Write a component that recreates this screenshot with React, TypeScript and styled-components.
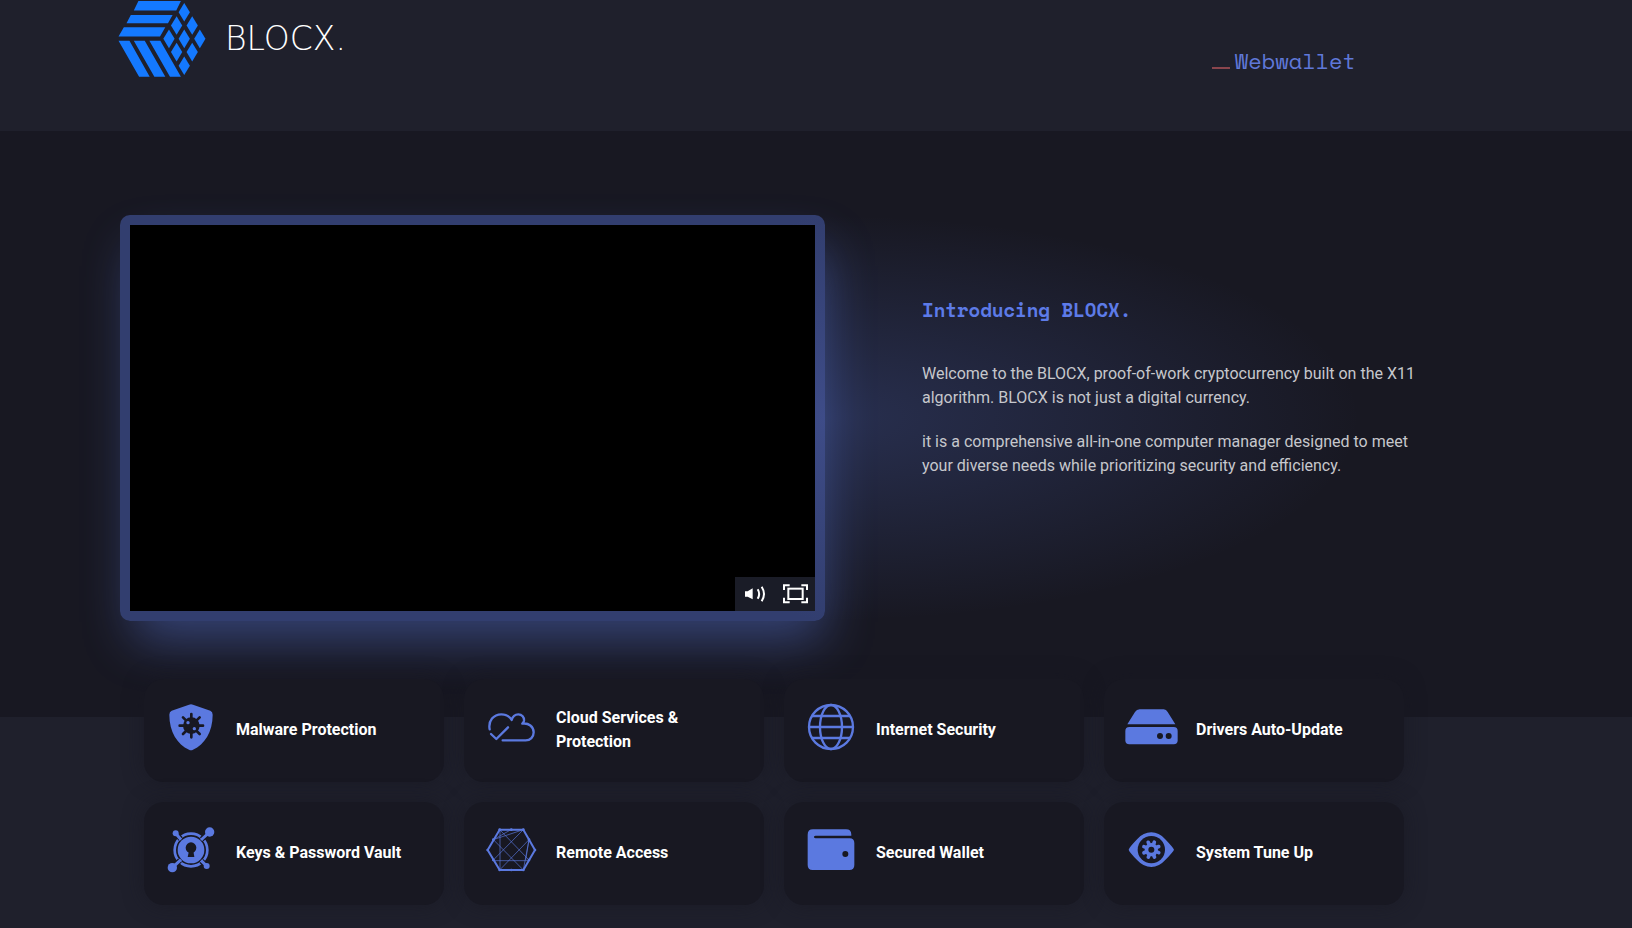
import React from "react";
import styled, { createGlobalStyle } from "styled-components";

const ACCENT = "#5b79e0";
const DARK = "#181822";

const GlobalStyle = createGlobalStyle`
  *, *::before, *::after { box-sizing: border-box; }
  body {
    margin: 0;
    background: #1f202c;
    font-family: Roboto, "Liberation Sans", sans-serif;
    font-size: 16px;
    line-height: 24px;
    color: #c6c7cc;
  }
`;

const Page = styled.div`
  min-height: 100vh;
  overflow: hidden;
`;

const Header = styled.header`
  display: flex;
  justify-content: space-between;
  align-items: flex-start;
  height: 131px;
  padding: 0 276px 0 118px;
  background: #1f202c;
`;

const Brand = styled.a`
  display: flex;
  align-items: center;
  gap: 19px;
  padding-top: 1px;
  color: #fff;
  text-decoration: none;
`;

const BrandName = styled.span`
  font-family: "DejaVu Sans", sans-serif;
  font-weight: 200;
  font-size: 33px;
  line-height: 36px;
`;

const NavLink = styled.a`
  display: flex;
  align-items: center;
  gap: 5px;
  margin-top: 49px;
  font-family: "Space Mono", "Liberation Mono", monospace;
  font-size: 22px;
  line-height: 24px;
  color: #5f78d8;
  text-decoration: none;

  &::before {
    content: "";
    width: 18px;
    height: 2px;
    margin-top: 14px;
    background: #8a454d;
  }
`;

const Hero = styled.section`
  display: grid;
  grid-template-columns: 705fr 506fr;
  align-items: start;
  column-gap: 97px;
  padding: 84px 12.5% 96px 120px;
  background: ${DARK};
`;

const Player = styled.div`
  position: relative;
  isolation: isolate;
  padding: 10px;
  border-radius: 10px;
  background: radial-gradient(ellipse 120px 50% at 100% 50%, #3e4c88, #323e6f);
  box-shadow: 6px 26px 50px -8px rgba(91, 121, 224, 0.45);
`;

const Glow = styled.div`
  position: absolute;
  z-index: -1;
  top: 0;
  left: 100%;
  width: 80%;
  height: 100%;
  background: radial-gradient(ellipse 95% 50% at 0 50%, rgba(91, 121, 224, 0.24), rgba(91, 121, 224, 0));
`;

const Video = styled.video`
  display: block;
  width: 100%;
  aspect-ratio: 685 / 386;
  background: #000;
`;

const Controls = styled.div`
  position: absolute;
  right: 10px;
  bottom: 10px;
  display: flex;
  background: #1a1c27;
`;

const ControlButton = styled.button`
  display: block;
  width: 40px;
  height: 34px;
  padding: 0;
  border: 0;
  background: none;
  color: #fff;

  svg { display: block; }
`;

const Intro = styled.div`
  position: relative;
  padding-top: 83px;
`;

const Title = styled.h2`
  margin: 0 0 40px;
  font-family: "Space Mono", "Liberation Mono", monospace;
  font-size: 19px;
  line-height: 24px;
  color: #5d7be8;
`;

const Paragraph = styled.p`
  margin: 0 0 20px;
`;

const Features = styled.ul`
  position: relative;
  display: grid;
  grid-template-columns: repeat(4, 1fr);
  gap: 20px;
  margin: -38px 12.5% 0 120px;
  padding: 0 24px 23px;
  list-style: none;
`;

const Card = styled.li`
  display: flex;
  gap: 18px;
  height: 103px;
  padding: 0 20px;
  border-radius: 20px;
  background: ${DARK};
  box-shadow: 0 0 20px rgba(24, 24, 34, 0.6);
`;

const CardIcon = styled.span`
  display: flex;
  align-items: center;
  flex: none;
  padding-bottom: 8px;
`;

const CardTitle = styled.h3`
  align-self: center;
  margin: 0;
  padding-bottom: 2px;
  font-size: 16px;
  font-weight: 700;
  line-height: 24px;
  color: #fff;
`;

const Logo = () => (
  <svg width="88" height="76" viewBox="54 3 264 229" fill="#1479ff" aria-hidden="true">
    <path d="M115 3H243L229 32H101ZM92 45H218L204 70H79ZM71 82H196L180 110H55Z" />
    <path d="M55 123H88L149 231H117ZM101 123H134L196 231H163ZM148 123H181L243 231H210Z" />
    {[[253, 37], [230, 77], [277, 77], [207, 117], [253, 117], [300, 117], [230, 157], [277, 157], [253, 198]].map(
      ([x, y]) => (
        <path key={`${x}-${y}`} d={`M${x} ${y - 28}L${x + 17} ${y}L${x} ${y + 28}L${x - 17} ${y}Z`} />
      ),
    )}
  </svg>
);

const Icon = ({ children }: { children: React.ReactNode }) => (
  <svg width="54" height="54" viewBox="0 0 162 162" fill="none" aria-hidden="true">
    {children}
  </svg>
);

const ShieldIcon = () => (
  <Icon>
    <path d="M75 14Q81 11 87 14L139 32Q146 35 146 44C146 95 122 133 87 149Q81 152 75 149C40 133 16 95 16 44Q16 35 23 32Z" fill={ACCENT} />
    <circle cx="82" cy="77" r="25" fill={DARK} />
    <g stroke={DARK} strokeWidth="8" strokeLinecap="round">
      <path d="M82 42V112M47 77H117M57 52L107 102M107 52L57 102" />
    </g>
    <circle cx="72" cy="68" r="5" fill={ACCENT} />
    <circle cx="91" cy="86" r="5" fill={ACCENT} />
  </Icon>
);

const CloudIcon = () => (
  <Icon>
    <g stroke={ACCENT} strokeWidth="7" strokeLinecap="round" strokeLinejoin="round">
      <path d="M17 88C12 62 29 43 52 43C65 43 76 48 83 60C86 49 93 43 103 43C114 43 121 52 120 62Q119 67 115 71C134 68 149 80 149 97C149 111 139 121 125 121H56" />
      <path d="M21 102L37 117L72 82" />
    </g>
  </Icon>
);

const GlobeIcon = () => (
  <Icon>
    <g stroke={ACCENT} strokeWidth="7">
      <circle cx="81" cy="81" r="66" />
      <ellipse cx="81" cy="81" rx="33" ry="66" />
      <path d="M14 81H148M23 48H139M23 114H139" />
    </g>
  </Icon>
);

const DriveIcon = () => (
  <Icon>
    <path d="M10 73L33 36Q38 28 47 28H119Q127 28 131 36L154 73Z" fill={ACCENT} />
    <rect x="4" y="81" width="157" height="52" rx="12" fill={ACCENT} />
    <circle cx="108" cy="108" r="9" fill={DARK} />
    <circle cx="134" cy="108" r="9" fill={DARK} />
  </Icon>
);

const VaultIcon = () => (
  <Icon>
    <circle cx="81" cy="81" r="49" stroke={ACCENT} strokeWidth="8" />
    <path d="M25 134L48 112M137 27L113 49M35 31L50 48M128 129L112 114" stroke={DARK} strokeWidth="16" />
    <path d="M25 134L51 110M137 27L111 51M35 31L51 50M128 129L111 112" stroke={ACCENT} strokeWidth="9" />
    <circle cx="137" cy="27" r="14" fill={ACCENT} />
    <circle cx="25" cy="134" r="14" fill={ACCENT} />
    <circle cx="35" cy="31" r="9" fill={ACCENT} />
    <circle cx="128" cy="129" r="9" fill={ACCENT} />
    <circle cx="81" cy="81" r="40" fill={ACCENT} />
    <circle cx="81" cy="74" r="16" fill={DARK} />
    <path d="M75 84H88L91 102H71Z" fill={DARK} />
  </Icon>
);

const MeshIcon = () => (
  <Icon>
    <path d="M47 20H118L153 81L118 141H47L11 81Z" stroke={ACCENT} strokeWidth="6" />
    <path
      d="M47 20L135 111M118 20L28 111M28 50L118 141M135 50L47 141M28 50L118 20M28 50L81 20M28 113H135M48 20V141M135 50L118 141M135 50L125 111"
      stroke={ACCENT}
      strokeWidth="2"
    />
    {[[47, 20], [82, 20], [118, 20], [153, 81], [118, 141], [82, 141], [47, 141], [11, 81], [135, 50], [135, 111], [28, 50], [28, 111]].map(
      ([x, y]) => (
        <circle key={`${x}-${y}`} cx={x} cy={y} r="4" fill={ACCENT} />
      ),
    )}
  </Icon>
);

const WalletIcon = () => (
  <Icon>
    <path
      d="M27 19H126Q142 19 142 35V38H35Q30 38 30 42Q30 46 35 46H137Q151 46 151 60V126Q151 141 136 141H26Q11 141 11 126V35Q11 19 27 19Z"
      fill={ACCENT}
    />
    <circle cx="124" cy="93" r="9" fill={DARK} />
  </Icon>
);

const EyeIcon = () => (
  <Icon>
    <path
      d="M14 80Q15 74 40 48Q58 28 82 28Q105 28 123 48Q148 74 150 80Q148 86 123 112Q105 132 82 132Q58 132 40 112Q15 86 14 80Z"
      fill={ACCENT}
    />
    <circle cx="82" cy="80" r="41" fill={DARK} />
    <path d="M82 56V104M58 80H106M65 63L99 97M99 63L65 97" stroke={ACCENT} strokeWidth="11" strokeLinecap="round" transform="rotate(22 82 80)" />
    <circle cx="82" cy="80" r="20" fill={ACCENT} />
    <circle cx="82" cy="80" r="9" fill={DARK} />
  </Icon>
);

const VolumeIcon = () => (
  <svg width="40" height="34" viewBox="0 0 120 102" fill="none" aria-hidden="true">
    <path d="M30 43H38L53 34V67L38 59H30Z" fill="currentColor" />
    <path d="M68 37Q77 51 68 65M80 29Q94 51 80 73" stroke="currentColor" strokeWidth="6" />
  </svg>
);

const FullscreenIcon = () => (
  <svg width="40" height="34" viewBox="0 0 120 102" fill="none" stroke="currentColor" strokeWidth="6" aria-hidden="true">
    <path d="M27 39V25H44M79 25H96V39M96 62V76H79M44 76H27V62" />
    <rect x="40" y="35" width="43" height="31" />
  </svg>
);

const features = [
  { title: "Malware Protection", Glyph: ShieldIcon },
  { title: "Cloud Services & Protection", Glyph: CloudIcon },
  { title: "Internet Security", Glyph: GlobeIcon },
  { title: "Drivers Auto-Update", Glyph: DriveIcon },
  { title: "Keys & Password Vault", Glyph: VaultIcon },
  { title: "Remote Access", Glyph: MeshIcon },
  { title: "Secured Wallet", Glyph: WalletIcon },
  { title: "System Tune Up", Glyph: EyeIcon },
];

export default function App() {
  return (
    <Page>
      <GlobalStyle />
      <Header>
        <Brand href="#home">
          <Logo />
          <BrandName>BLOCX.</BrandName>
        </Brand>
        <NavLink href="#webwallet">Webwallet</NavLink>
      </Header>
      <main>
        <Hero>
          <Player>
            <Glow />
            <Video aria-label="BLOCX introduction" />
            <Controls>
              <ControlButton type="button" aria-label="Mute">
                <VolumeIcon />
              </ControlButton>
              <ControlButton type="button" aria-label="Full screen">
                <FullscreenIcon />
              </ControlButton>
            </Controls>
          </Player>
          <Intro>
            <Title>Introducing BLOCX.</Title>
            <Paragraph>
              Welcome to the BLOCX, proof-of-work cryptocurrency built on the X11 algorithm. BLOCX is not just a
              digital currency.
            </Paragraph>
            <Paragraph>
              it is a comprehensive all-in-one computer manager designed to meet your diverse needs while
              prioritizing security and efficiency.
            </Paragraph>
          </Intro>
        </Hero>
        <Features>
          {features.map(({ title, Glyph }) => (
            <Card key={title}>
              <CardIcon>
                <Glyph />
              </CardIcon>
              <CardTitle>{title}</CardTitle>
            </Card>
          ))}
        </Features>
      </main>
    </Page>
  );
}
